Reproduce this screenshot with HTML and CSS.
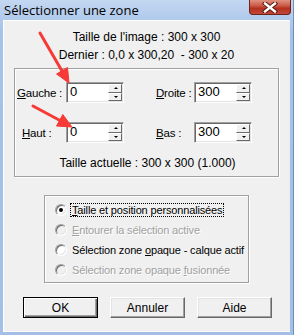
FILE: index.html
```html
<!DOCTYPE html>
<html>
<head>
    <title>Sélectionner une zone</title>
    <meta charset="utf-8">
    <link rel="stylesheet" href="styles.css">
</head>
<body>
    <div class="window">
        <div class="titlebar">
            <span class="title">Sélectionner une zone</span>
            <div class="close">
                <svg width="18" height="11" viewBox="0 0 18 11">
                    <path d="M4 1.5 L14 9.5 M14 1.5 L4 9.5" stroke="#5a1a12" stroke-width="4.4" stroke-linecap="square"/>
                    <path d="M4 1.5 L14 9.5 M14 1.5 L4 9.5" stroke="#fff" stroke-width="2.4" stroke-linecap="square"/>
                </svg>
            </div>
        </div>
        <div class="client">
            <p class="info">Taille de l'image : 300 x 300</p>
            <p class="info">Dernier : 0,0 x 300,20&nbsp; - 300 x 20</p>

            <div class="group">
                <div class="fields">
                    <label class="lbl"><u>G</u>auche :</label>
                    <div class="spin"><span class="val">0</span><div class="arrows"><span class="up"></span><span class="down"></span></div></div>
                    <span></span>
                    <label class="lbl"><u>D</u>roite :</label>
                    <div class="spin"><span class="val">300</span><div class="arrows"><span class="up"></span><span class="down"></span></div></div>

                    <label class="lbl lbl-haut"><u>H</u>aut :</label>
                    <div class="spin"><span class="val">0</span><div class="arrows"><span class="up"></span><span class="down"></span></div></div>
                    <span></span>
                    <label class="lbl"><u>B</u>as :</label>
                    <div class="spin"><span class="val">300</span><div class="arrows"><span class="up"></span><span class="down"></span></div></div>
                </div>
                <p class="current">Taille actuelle : 300 x 300 (1.000)</p>
            </div>

            <div class="options">
                <div class="radio"><span class="dot checked"></span><span class="focus"><u>T</u>aille et position personnalisées</span></div>
                <div class="radio disabled"><span class="dot"></span><span><u>E</u>ntourer la sélection active</span></div>
                <div class="radio"><span class="dot"></span><span>Sélection zone <u>o</u>paque - calque actif</span></div>
                <div class="radio disabled"><span class="dot"></span><span>Sélection zone opaque <u>f</u>usionnée</span></div>
            </div>

            <div class="buttons">
                <button class="btn default">OK</button>
                <button class="btn">Annuler</button>
                <button class="btn">Aide</button>
            </div>
        </div>

        <!-- annotation arrows drawn over the dialog -->
        <svg class="marks" width="294" height="335" viewBox="0 0 294 335">
            <g fill="#f63a36" stroke="#f63a36">
                <line x1="40" y1="33" x2="62" y2="71" stroke-width="3" stroke-linecap="round"/>
                <polygon points="69,83 56.5,74 67.5,67.5" stroke-width="1" stroke-linejoin="round"/>
                <line x1="33" y1="106" x2="60" y2="120.5" stroke-width="3" stroke-linecap="round"/>
                <polygon points="72,127 56.5,126 62.8,114.5" stroke-width="1" stroke-linejoin="round"/>
            </g>
        </svg>
    </div>
</body>
</html>
```

FILE: styles.css
```css
body {
    margin: 0;
    font-family: "Liberation Sans", Arial, sans-serif;
    font-size: 11px;
    color: #000;
}

.window {
    position: relative;
    width: 294px;
    height: 335px;
    box-sizing: border-box;
    padding: 0 3px 3px 3px;
    display: flex;
    flex-direction: column;
    background: linear-gradient(#c3d7f1, #a7c2e8 30px, #a3bfe6);
    border-right: 1px solid #6f8fbf;
}

.titlebar {
    height: 20px;
    display: flex;
    align-items: flex-start;
}

.title {
    padding: 2px 0 0 1px;
    font-family: "Open Sans", "Noto Sans", sans-serif;
    font-size: 13px;
    line-height: 16px;
}

.close {
    margin-left: auto;
    margin-right: -1px;
    width: 40px;
    height: 14px;
    display: flex;
    align-items: center;
    justify-content: center;
    background: linear-gradient(#e09282, #cc5a47 40%, #b3301f 60%, #c4483a);
    border: 1px solid #6e2318;
    border-top: none;
    border-radius: 0 0 4px 4px;
}

.client {
    flex: 1;
    background: #f0f0f0;
    border-top: 1px solid #fff;
    border-left: 1px solid #fff;
    border-right: 1px solid #e8eef6;
    border-bottom: 1px solid #fff;
    padding-top: 7px;
}

.info {
    margin: 0;
    font-size: 12px;
    line-height: 18px;
    text-align: center;
}

.group {
    margin: 4px 10px 0 10px;
    height: 109px;
    box-sizing: border-box;
    padding: 13px 0 0 2px;
    border: 1px solid #a0a0a0;
    box-shadow: inset 1px 1px 0 #fff, 1px 1px 0 #fff;
}

.fields {
    display: grid;
    grid-template-columns: 49px 58px 32px 38px 58px;
    grid-template-rows: 21px 21px;
    row-gap: 19px;
    align-items: center;
}

.lbl {
    font-size: 11.5px;
    letter-spacing: -0.2px;
    white-space: nowrap;
}

.lbl-haut {
    padding-left: 5px;
}

.spin {
    height: 21px;
    box-sizing: border-box;
    display: flex;
    background: #fff;
    border: 1px solid;
    border-color: #a0a0a0 #fff #fff #a0a0a0;
    box-shadow: inset 1px 1px 0 #696969, inset -1px -1px 0 #e3e3e3;
}

.val {
    flex: 1;
    padding: 1px 0 0 3px;
    font-size: 13px;
    line-height: 16px;
}

.arrows {
    width: 14px;
    margin: 1px 1px 1px 0;
    display: flex;
    flex-direction: column;
}

.arrows span {
    flex: 1;
    position: relative;
    background: #f0f0f0;
    border: 1px solid;
    border-color: #fff #696969 #696969 #fff;
}

.arrows span::after {
    content: "";
    position: absolute;
    left: 5px;
    top: 2px;
    border-left: 2px solid transparent;
    border-right: 2px solid transparent;
}

.arrows .up::after {
    border-bottom: 2px solid #000;
}

.arrows .down::after {
    border-top: 2px solid #000;
}

.current {
    margin: 11px 0 0 0;
    font-size: 12px;
    line-height: 18px;
    text-align: center;
}

.options {
    margin: 18px 0 0 40px;
    width: 205px;
    height: 88px;
    box-sizing: border-box;
    padding: 4px 0 0 10px;
    border: 1px solid #a0a0a0;
    box-shadow: inset 1px 1px 0 #fff, 1px 1px 0 #fff;
}

.radio {
    height: 20px;
    display: flex;
    align-items: center;
    gap: 5px;
    white-space: nowrap;
    letter-spacing: -0.15px;
}

.dot {
    flex: none;
    width: 12px;
    height: 12px;
    box-sizing: border-box;
    border-radius: 50%;
    background: #fff;
    border: 1px solid;
    border-color: #a0a0a0 #fff #fff #a0a0a0;
    box-shadow: inset 1px 1px 0 #696969, inset -1px -1px 0 #e3e3e3;
    position: relative;
}

.dot.checked::after {
    content: "";
    position: absolute;
    left: 3px;
    top: 3px;
    width: 4px;
    height: 4px;
    border-radius: 50%;
    background: #000;
}

.focus {
    outline: 1px dotted #000;
    outline-offset: 0;
    padding: 0 1px;
    margin-left: -1px;
}

.disabled {
    color: #a0a0a0;
    text-shadow: 1px 1px 0 #fff;
}

.disabled .dot {
    background: #f0f0f0;
}

.buttons {
    display: flex;
    gap: 12px;
    padding: 14px 0 0 19px;
}

.btn {
    width: 75px;
    height: 21px;
    box-sizing: border-box;
    padding: 0;
    font: inherit;
    font-size: 12px;
    color: #000;
    background: #f0f0f0;
    border: 1px solid;
    border-color: #fff #696969 #696969 #fff;
    box-shadow: inset -1px -1px 0 #a0a0a0, inset 1px 1px 0 #e3e3e3;
}

.btn.default {
    border: 1px solid #000;
    box-shadow: inset 1px 1px 0 #fff, inset -1px -1px 0 #696969, inset -2px -2px 0 #a0a0a0;
}

.marks {
    position: absolute;
    left: 0;
    top: 0;
    pointer-events: none;
}
```
